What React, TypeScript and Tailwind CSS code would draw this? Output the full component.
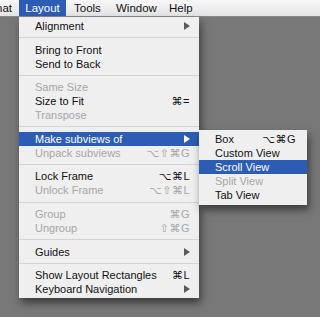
import React from "react"

type Item =
  | { sep: true }
  | { label: string; key?: string; arrow?: boolean; off?: boolean; hi?: boolean; sep?: false }

const font = { fontFamily: '"Liberation Sans", "DejaVu Sans", sans-serif' }

// main Layout menu, top to bottom
const layoutItems: Item[] = [
  { label: "Alignment", arrow: true },
  { sep: true },
  { label: "Bring to Front" },
  { label: "Send to Back" },
  { sep: true },
  { label: "Same Size", off: true },
  { label: "Size to Fit", key: "⌘=" },
  { label: "Transpose", off: true },
  { sep: true },
  { label: "Make subviews of", arrow: true, hi: true },
  { label: "Unpack subviews", key: "⌥⇧⌘G", off: true },
  { sep: true },
  { label: "Lock Frame", key: "⌥⌘L" },
  { label: "Unlock Frame", key: "⌥⇧⌘L", off: true },
  { sep: true },
  { label: "Group", key: "⌘G", off: true },
  { label: "Ungroup", key: "⇧⌘G", off: true },
  { sep: true },
  { label: "Guides", arrow: true },
  { sep: true },
  { label: "Show Layout Rectangles", key: "⌘L" },
  { label: "Keyboard Navigation", arrow: true },
]

const subItems: Item[] = [
  { label: "Box", key: "⌥⌘G" },
  { label: "Custom View" },
  { label: "Scroll View", hi: true },
  { label: "Split View", off: true },
  { label: "Tab View" },
]

function Arrow({ white }: { white?: boolean }) {
  return (
    <svg width="6" height="8" viewBox="0 0 6 8" className="shrink-0">
      <path d="M0 0 L6 4 L0 8 Z" fill={white ? "#ffffff" : "#5a5a5a"} />
    </svg>
  )
}

function MenuRows({ items, padL, padR }: { items: Item[]; padL: string; padR: string }) {
  return (
    <>
      {items.map((it, i) =>
        it.sep ? (
          <div key={i} className="h-[9.6px] flex items-center">
            <div className="h-px w-full bg-[#d4d4d4]" />
          </div>
        ) : (
          <div
            key={i}
            className={`h-[14px] flex items-center justify-between ${padL} ${padR} ${
              it.hi ? "bg-[#2c5cb4] text-white" : it.off ? "text-[#a6a6a6]" : "text-[#111]"
            }`}
          >
            <span className="whitespace-nowrap">{it.label}</span>
            {it.key && <span className="whitespace-nowrap tracking-[0.5px]">{it.key}</span>}
            {it.arrow && <Arrow white={it.hi} />}
          </div>
        )
      )}
    </>
  )
}

export default function App() {
  return (
    <div className="relative w-[320px] h-[317px] overflow-hidden bg-[#787878] text-[11px] leading-[14px]" style={font}>
      {/* menu bar */}
      <div className="h-[17px] flex items-stretch bg-gradient-to-b from-[#f8f8f8] to-[#e4e4e4] border-b border-[#8a8a8a] text-[#111] text-[11.5px]">
        <span className="w-[19px] flex items-center justify-end pr-[7px] whitespace-nowrap overflow-hidden">mat</span>
        <span className="w-[47px] flex items-center justify-center bg-[#2c5cb4] text-white">Layout</span>
        <span className="w-[50px] pl-[8px] flex items-center">Tools</span>
        <span className="w-[53px] flex items-center">Window</span>
        <span className="flex items-center">Help</span>
      </div>

      {/* Layout menu */}
      <div className="absolute left-[19px] top-[17px] w-[180px] py-[2px] bg-[#efefef] shadow-[2px_5px_8px_rgba(0,0,0,0.5)]">
        <MenuRows items={layoutItems} padL="pl-[16px]" padR="pr-[9px]" />
      </div>

      {/* Make subviews of submenu */}
      <div className="absolute left-[199px] top-[130px] w-[108px] pt-[2px] pb-[3px] bg-[#efefef] shadow-[2px_5px_8px_rgba(0,0,0,0.5)]">
        <MenuRows items={subItems} padL="pl-[16px]" padR="pr-[11px]" />
      </div>
    </div>
  )
}
